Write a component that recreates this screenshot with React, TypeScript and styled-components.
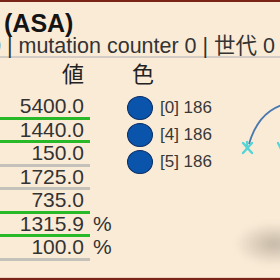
import React from "react";
import styled, { createGlobalStyle } from "styled-components";

const Global = createGlobalStyle`
  html, body { margin: 0; padding: 0; background: #faebd7; }
  body {
    width: 280px; height: 280px; overflow: hidden;
    font-family: "Liberation Sans", "Noto Sans CJK JP", sans-serif;
  }
`;

const Frame = styled.div`
  position: relative;
  box-sizing: border-box;
  width: 280px;
  height: 280px;
  overflow: hidden;
  background: #faebd7;
  border-top: 2px solid #7a2417;
  border-bottom: 2px solid #7a2417;
  box-shadow: inset 0 -1px 0 #f1d2c2;
  display: flex;
  flex-direction: column;
`;

const Title = styled.h1`
  margin: 0;
  padding: 8px 0 0 4px;
  font-size: 25px;
  line-height: 26px;
  font-weight: bold;
  color: #141414;
  white-space: nowrap;
`;

const SubLine = styled.div`
  margin-left: -11px;
  font-size: 21.5px;
  line-height: 20px;
  color: #333;
  white-space: nowrap;
  border-bottom: 2px solid #d3cdc5;
`;

const Main = styled.div`
  display: flex;
`;

const ValuesCol = styled.div`
  width: 127px;
  display: flex;
  flex-direction: column;
`;

const ColHeader = styled.div<{ $align: "right" | "left" }>`
  height: 38px;
  box-sizing: border-box;
  padding-top: 5px;
  font-size: 22px;
  line-height: 24px;
  color: #222;
  ${(p) =>
    p.$align === "right"
      ? "width: 90px; padding-right: 6px; text-align: right;"
      : "padding-left: 5px;"}
`;

const Row = styled.div`
  display: flex;
  align-items: flex-start;
  font-size: 21px;
  line-height: 20.5px;
  color: #333;
`;

const ValueBox = styled.div<{ $ok: boolean }>`
  box-sizing: border-box;
  width: 90px;
  height: 23.5px;
  padding-right: 6px;
  text-align: right;
  border-bottom: 3px solid ${(p) => (p.$ok ? "#27b927" : "#c4c0ba")};
`;

const Unit = styled.span`
  padding-left: 3px;
`;

const ColorCol = styled.div`
  display: flex;
  flex-direction: column;
`;

const ColorList = styled.div`
  display: flex;
  flex-direction: column;
  gap: 3px;
`;

const ColorItem = styled.div`
  display: flex;
  align-items: center;
  gap: 7px;
  font-size: 17px;
  color: #383838;
`;

const Dot = styled.span`
  box-sizing: border-box;
  width: 26px;
  height: 24px;
  border-radius: 50%;
  background: #0a54ab;
  border: 1.5px solid #0c2f66;
`;

const Overlay = styled.svg`
  position: absolute;
  left: 236px;
  top: 95px;
`;

const Blob = styled.div`
  position: absolute;
  left: 234px;
  top: 220px;
  width: 80px;
  height: 44px;
  border-radius: 50%;
  background: radial-gradient(ellipse at center, rgba(160, 148, 132, 0.6) 0%, rgba(160, 148, 132, 0) 70%);
  filter: blur(3px);
`;

const rows = [
  { v: "5400.0", ok: true, unit: "" },
  { v: "1440.0", ok: true, unit: "" },
  { v: "150.0", ok: false, unit: "" },
  { v: "1725.0", ok: false, unit: "" },
  { v: "735.0", ok: true, unit: "" },
  { v: "1315.9", ok: true, unit: "%" },
  { v: "100.0", ok: false, unit: "%" },
];

const colors = ["[0] 186", "[4] 186", "[5] 186"];

export default function App() {
  return (
    <>
      <Global />
      <Frame>
        <Title>(ASA)</Title>
        <SubLine>0 | mutation counter 0 | 世代 0</SubLine>
        <Main>
          <ValuesCol>
            <ColHeader $align="right">値</ColHeader>
            {rows.map((r, i) => (
              <Row key={i}>
                <ValueBox $ok={r.ok}>{r.v}</ValueBox>
                {r.unit && <Unit>{r.unit}</Unit>}
              </Row>
            ))}
          </ValuesCol>
          <ColorCol>
            <ColHeader $align="left">色</ColHeader>
            <ColorList>
              {colors.map((c) => (
                <ColorItem key={c}>
                  <Dot />
                  <span>{c}</span>
                </ColorItem>
              ))}
            </ColorList>
          </ColorCol>
        </Main>
        <Overlay width="44" height="65" viewBox="0 0 44 65">
          <defs>
            <filter id="soft" x="-50%" y="-50%" width="200%" height="200%">
              <feGaussianBlur stdDeviation="0.7" />
            </filter>
          </defs>
          <path d="M46 8 Q22 16 13 47" fill="none" stroke="#4a78b0" strokeWidth="1.8" />
          <g stroke="#56d4d6" strokeWidth="2.4" strokeLinecap="round" filter="url(#soft)">
            <line x1="7" y1="46" x2="16" y2="56" />
            <line x1="16" y1="46" x2="7" y2="56" />
            <line x1="11" y1="45" x2="11" y2="52" />
          </g>
          <g stroke="#56d4d6" strokeWidth="2.2" strokeLinecap="round" filter="url(#soft)">
            <line x1="42" y1="46" x2="45" y2="52" />
          </g>
        </Overlay>
        <Blob />
      </Frame>
    </>
  );
}
